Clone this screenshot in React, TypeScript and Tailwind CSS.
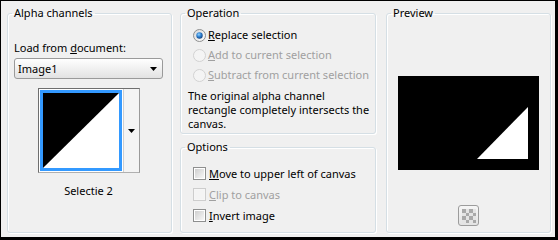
import React from 'react';

const Radio = ({ checked, disabled }: { checked?: boolean; disabled?: boolean }) => (
  <svg width="13" height="13" viewBox="0 0 13 13" className="shrink-0">
    <defs>
      <linearGradient id="rfill" x1="0" y1="0" x2="1" y2="1">
        <stop offset="0" stopColor="#d8d8d8" />
        <stop offset="1" stopColor="#ffffff" />
      </linearGradient>
      <radialGradient id="rdot" cx="0.4" cy="0.35" r="0.7">
        <stop offset="0" stopColor="#8fd3ff" />
        <stop offset="0.5" stopColor="#2e7fd0" />
        <stop offset="1" stopColor="#123f7a" />
      </radialGradient>
    </defs>
    <circle
      cx="6.5"
      cy="6.5"
      r="6"
      fill={disabled ? '#f4f4f4' : 'url(#rfill)'}
      stroke={disabled ? '#d2d2d2' : '#8e8f8f'}
    />
    {checked && <circle cx="6.5" cy="6.5" r="3.2" fill="url(#rdot)" />}
  </svg>
);

const Checkbox = ({ disabled }: { disabled?: boolean }) => (
  <div
    className={`w-[13px] h-[13px] shrink-0 border p-[1px] ${
      disabled ? 'border-[#cdcdcd] bg-[#f6f6f6]' : 'border-[#8e8f8f] bg-white'
    }`}
  >
    <div
      className={`w-full h-full ${
        disabled ? 'bg-[#f4f4f4]' : 'bg-gradient-to-br from-[#cfcfcf] to-[#f7f7f7]'
      }`}
    />
  </div>
);

const DownArrow = () => (
  <svg width="7" height="4" viewBox="0 0 7 4" className="block">
    <path d="M0 0h7L3.5 4z" fill="#000" />
  </svg>
);

const GroupBox = ({
  title,
  className = '',
  children,
}: {
  title: string;
  className?: string;
  children?: React.ReactNode;
}) => (
  <fieldset
    className={`border border-[#d5dfe5] rounded-[3px] shadow-[inset_1px_1px_0_#fff,1px_1px_0_#fff] ${className}`}
  >
    <legend className="ml-[4px] px-[2px] leading-[14px]">{title}</legend>
    {children}
  </fieldset>
);

export default function App() {
  return (
    <div className="w-[558px] h-[240px] bg-[#f0f0f0] border-black border-t border-l border-r-[3px] border-b-[3px] flex items-start pt-[5px] pl-[6px] text-[11px] text-black whitespace-nowrap font-['Noto_Sans',sans-serif]">
      {/* Alpha channels */}
      <GroupBox title="Alpha channels" className="w-[165px] h-[227px]">
        <div className="pl-[6px] pt-[20px]">
          <div className="leading-4">
            Load from <span className="underline">d</span>ocument:
          </div>
          <div className="mt-[2px] w-[149px] h-[21px] flex items-center justify-between pl-[3px] pr-[5px] border border-[#9a9a9a] rounded-[3px] bg-gradient-to-b from-white to-[#e2e2e2]">
            <span className="leading-4">Image1</span>
            <DownArrow />
          </div>
          <div className="mt-[9px] ml-[24px] flex w-[102px] h-[85px] border-t border-l border-[#6e6e6e] border-r border-b border-r-[#9a9a9a] border-b-[#b0b0b0]">
            <div className="bg-white p-[1px]">
              <div className="w-[82px] h-[81px] border-[3px] border-[#3399ff]">
                <svg width="76" height="75" viewBox="0 0 76 75" className="block">
                  <rect width="76" height="75" fill="#fff" />
                  <polygon points="0,0 76,0 0,75" fill="#000" />
                </svg>
              </div>
            </div>
            <div className="flex-1 flex items-center justify-center bg-[#f4f4f4] border-l border-[#cfcfcf]">
              <DownArrow />
            </div>
          </div>
          <div className="mt-[10px] w-[149px] text-center leading-4">Selectie 2</div>
        </div>
      </GroupBox>

      {/* Operation + Options */}
      <div className="ml-[8px] w-[196px] flex flex-col">
        <GroupBox title="Operation" className="h-[128px]">
          <div className="pt-[5px] pl-[7px]">
            <div className="h-5 flex items-center gap-[2px] pl-[5px]">
              <Radio checked />
              <span className="leading-4">
                <span className="underline">R</span>eplace selection
              </span>
            </div>
            <div className="h-5 flex items-center gap-[2px] pl-[5px] text-[#a0a0a0]">
              <Radio disabled />
              <span className="leading-4">
                <span className="underline">A</span>dd to current selection
              </span>
            </div>
            <div className="h-5 flex items-center gap-[2px] pl-[5px] text-[#a0a0a0]">
              <Radio disabled />
              <span className="leading-4">
                <span className="underline">S</span>ubtract from current selection
              </span>
            </div>
            <p className="mt-[4px] leading-[14px]">
              The original alpha channel
              <br />
              rectangle completely intersects the
              <br />
              canvas.
            </p>
          </div>
        </GroupBox>
        <GroupBox title="Options" className="mt-[6px] h-[93px]">
          <div className="pt-[9px] pl-[12px]">
            <div className="h-[21px] flex items-center gap-[3px]">
              <Checkbox />
              <span className="leading-4">
                <span className="underline">M</span>ove to upper left of canvas
              </span>
            </div>
            <div className="h-[21px] flex items-center gap-[3px] text-[#a0a0a0]">
              <Checkbox disabled />
              <span className="leading-4">
                <span className="underline">C</span>lip to canvas
              </span>
            </div>
            <div className="h-[21px] flex items-center gap-[3px]">
              <Checkbox />
              <span className="leading-4">
                <span className="underline">I</span>nvert image
              </span>
            </div>
          </div>
        </GroupBox>
      </div>

      {/* Preview */}
      <GroupBox title="Preview" className="ml-[10px] w-[165px] h-[227px]">
        <div className="pt-[56px] flex flex-col items-center">
          <svg width="141" height="94" viewBox="0 0 141 94" className="block">
            <rect width="141" height="94" fill="#000" />
            <polygon points="79,83 130,83 130,31" fill="#fff" />
          </svg>
          <button className="mt-[35px] w-[21px] h-[21px] flex items-center justify-center rounded-[3px] border border-[#9c9c9c] bg-gradient-to-b from-[#f6f6f6] to-[#e3e3e3]">
            <svg width="14" height="14" viewBox="0 0 4 4" className="block" shapeRendering="crispEdges">
              <rect width="4" height="4" fill="#e4e4e4" />
              <rect x="0" y="0" width="1" height="1" fill="#a9a9a9" />
              <rect x="2" y="0" width="1" height="1" fill="#a9a9a9" />
              <rect x="1" y="1" width="1" height="1" fill="#a9a9a9" />
              <rect x="3" y="1" width="1" height="1" fill="#a9a9a9" />
              <rect x="0" y="2" width="1" height="1" fill="#a9a9a9" />
              <rect x="2" y="2" width="1" height="1" fill="#a9a9a9" />
              <rect x="1" y="3" width="1" height="1" fill="#a9a9a9" />
              <rect x="3" y="3" width="1" height="1" fill="#a9a9a9" />
            </svg>
          </button>
        </div>
      </GroupBox>
    </div>
  );
}
